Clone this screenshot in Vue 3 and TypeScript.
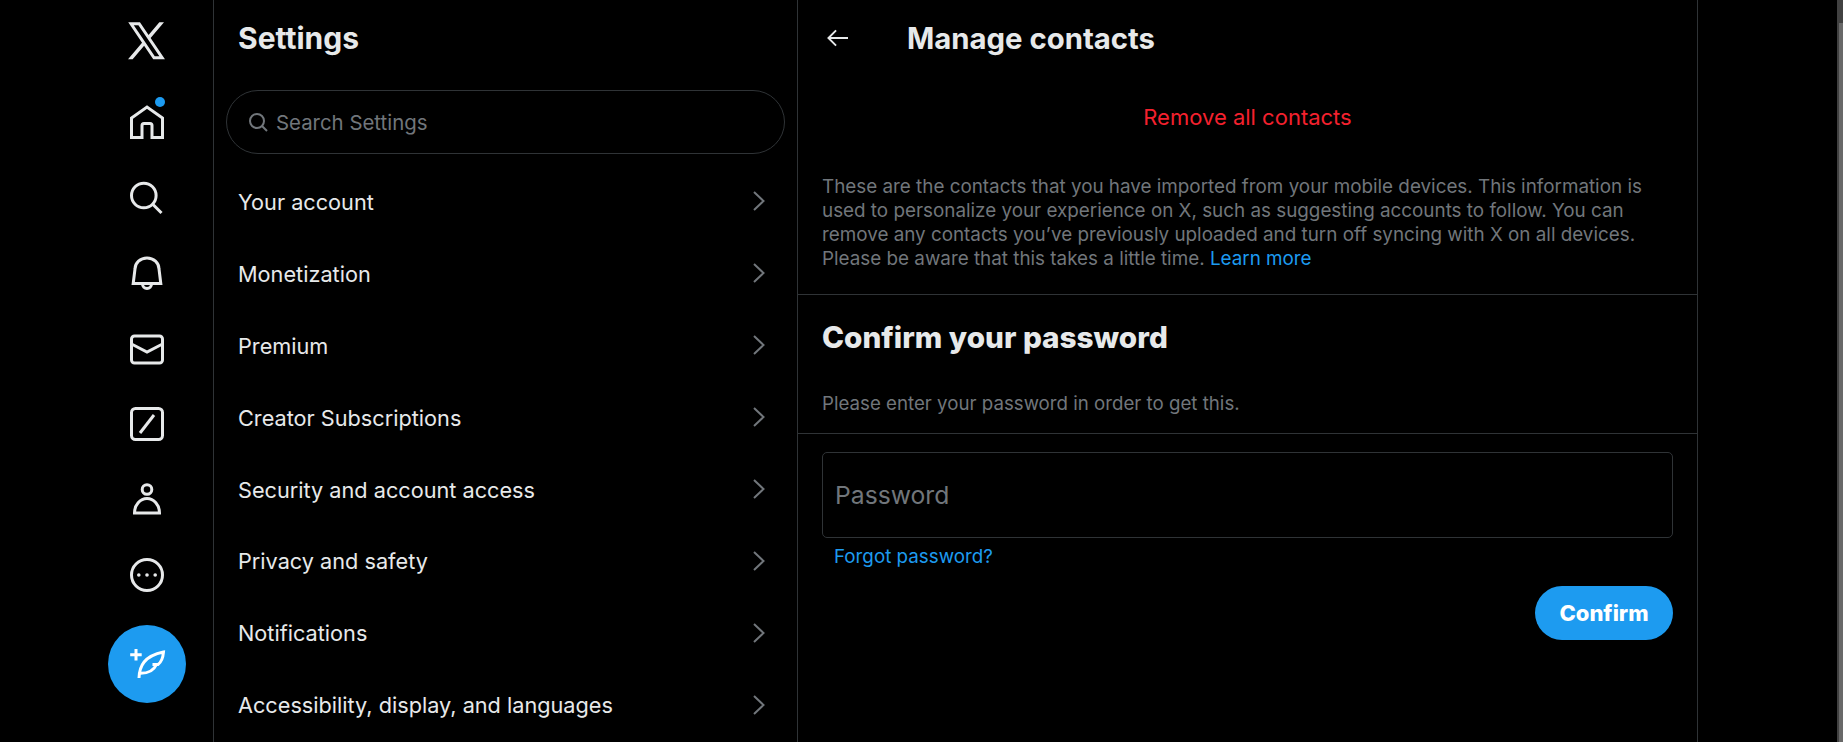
<script setup lang="ts">
const rows: string[] = [
  'Your account',
  'Monetization',
  'Premium',
  'Creator Subscriptions',
  'Security and account access',
  'Privacy and safety',
  'Notifications',
  'Accessibility, display, and languages',
]
</script>

<template>
  <div class="page">
    <nav class="rail">
      <a class="logo" aria-label="X">
        <svg viewBox="0 0 24 24" class="x-logo"><path d="M21.742 21.750l-7.563-11.179 7.056-8.321h-2.456l-5.691 6.714-4.540-6.714H2.359l7.290 10.776L2.250 21.750h2.456l6.035-7.118 4.818 7.118h6.191-.008zM7.739 3.818L18.810 20.182h-2.447L5.290 3.818h2.447z" /></svg>
      </a>
      <a class="nav-item">
        <span class="dot"></span>
        <svg viewBox="0 0 34 34" class="ico"><path d="M1.500 32.500V13L17 2l15.500 11v19.500H22V20.500a2 2 0 0 0-2-2h-6a2 2 0 0 0-2 2v12z" /></svg>
      </a>
      <a class="nav-item">
        <svg viewBox="0 0 34 34" class="ico"><circle cx="13.800" cy="14.500" r="12.300" /><path d="M23 23.500L31.500 32" /></svg>
      </a>
      <a class="nav-item">
        <svg viewBox="0 0 34 34" class="ico"><path d="M3.200 27.500L5 13a12 11 0 0 1 24 0l1.800 14.500z" /><path d="M12.500 28a4.500 4.500 0 0 0 9 0" /></svg>
      </a>
      <a class="nav-item">
        <svg viewBox="0 0 34 34" class="ico"><rect x="1.500" y="4" width="31" height="27" rx="3" /><path d="M1.500 12L17 20l15.500-8" /></svg>
      </a>
      <a class="nav-item">
        <svg viewBox="0 0 34 34" class="ico"><rect x="1.500" y="1.500" width="31" height="31" rx="4" /><path d="M10 26L24 8" /></svg>
      </a>
      <a class="nav-item">
        <svg viewBox="0 0 34 34" class="ico"><circle cx="17" cy="6.500" r="4.800" /><path d="M4.500 30a12.500 14.500 0 0 1 25 0z" /></svg>
      </a>
      <a class="nav-item">
        <svg viewBox="0 0 34 34" class="ico"><circle cx="17" cy="17" r="15.500" /><circle class="fill" cx="8.800" cy="17" r="1.800" /><circle class="fill" cx="17" cy="17" r="1.800" /><circle class="fill" cx="25.200" cy="17" r="1.800" /></svg>
      </a>
      <a class="compose">
        <svg viewBox="0 0 36 32" class="feather"><path d="M6 0v11.500M.200 5.700h11.500" /><path d="M9 29C9.500 17 14 7 33.500 3C33 9 31.500 13 28 15.500H22.500H26.500C24 21 19 24.500 10 24.300" /></svg>
      </a>
    </nav>

    <section class="settings">
      <h2 class="settings-title">Settings</h2>
      <div class="search">
        <svg viewBox="0 0 20 20" class="search-ico"><circle cx="9" cy="9" r="7" /><path d="M14 14l5 5" /></svg>
        <span>Search Settings</span>
      </div>
      <a v-for="r in rows" :key="r" class="row">
        <span>{{ r }}</span>
        <svg viewBox="0 0 12 20" class="chev"><path d="M1 1l9.500 9L1 19" /></svg>
      </a>
    </section>

    <main class="main">
      <header class="main-head">
        <svg viewBox="0 0 22 18" class="back"><path d="M9.500 1L1.500 9l8 8M1.500 9H22" /></svg>
        <h2 class="main-title">Manage contacts</h2>
      </header>
      <a class="remove">Remove all contacts</a>
      <p class="info">These are the contacts that you have imported from your mobile devices. This information is used to personalize your experience on X, such as suggesting accounts to follow. You can remove any contacts you’ve previously uploaded and turn off syncing with X on all devices. Please be aware that this takes a little time. <a class="link">Learn more</a></p>
      <div class="confirm-head">
        <h3 class="confirm-title">Confirm your password</h3>
        <p class="confirm-sub">Please enter your password in order to get this.</p>
      </div>
      <div class="form">
        <div class="input">Password</div>
        <a class="link forgot">Forgot password?</a>
        <button class="confirm-btn">Confirm</button>
      </div>
    </main>

    <div class="scrollbar"><div class="thumb"></div></div>
  </div>
</template>

<style>
html, body { margin: 0; background: #000; overflow: hidden; }
</style>

<style scoped>
.page {
  display: flex;
  width: 1843px;
  height: 742px;
  overflow: hidden;
  background: #000;
  color: #e7e9ea;
  font-family: Inter, "Liberation Sans", sans-serif;
}
.rail {
  box-sizing: border-box;
  width: 214px;
  flex: none;
  border-right: 1px solid #2f3336;
  display: flex;
  flex-direction: column;
  align-items: center;
  padding-left: 80px;
}
.logo { height: 80.500px; margin-bottom: 4px; display: flex; align-items: center; }
.x-logo { width: 49px; height: 45.500px; fill: #e7e9ea; }
.nav-item {
  position: relative;
  height: 75.500px;
  display: flex;
  align-items: center;
  justify-content: center;
}
.ico { width: 34px; height: 34px; fill: none; stroke: #e7e9ea; stroke-width: 3; }
.ico .fill { fill: #e7e9ea; stroke: none; }
.dot {
  position: absolute;
  width: 10px;
  height: 10px;
  border-radius: 50%;
  background: #1d9bf0;
  top: 12.500px;
  left: 25px;
}
.compose {
  box-sizing: border-box;
  margin-top: 12px;
  width: 78px;
  height: 78px;
  border-radius: 50%;
  background: #1d9bf0;
  display: flex;
  align-items: center;
  justify-content: center;
  padding: 2px 0 0 2px;
  flex: none;
}
.feather { width: 36px; height: 32px; fill: none; stroke: #fff; stroke-width: 3; overflow: visible; }
.settings {
  box-sizing: border-box;
  width: 584px;
  flex: none;
  border-right: 1px solid #2f3336;
}
.settings-title {
  margin: 0;
  height: 76px;
  line-height: 76px;
  padding-left: 24px;
  font-size: 30px;
  font-weight: 700;
}
.search {
  box-sizing: border-box;
  margin: 14px 12px 0;
  height: 64px;
  border: 1px solid #2f3336;
  border-radius: 32px;
  display: flex;
  align-items: center;
  padding-left: 21px;
  gap: 8px;
  color: #71767b;
  font-size: 20.400px;
}
.search-ico { width: 20px; height: 20px; fill: none; stroke: #71767b; stroke-width: 2; }
.row {
  height: 71.900px;
  display: flex;
  align-items: center;
  justify-content: space-between;
  padding: 0 32px 0 24px;
  font-size: 21.700px;
}
.row:first-of-type { margin-top: 12px; }
.chev { width: 12px; height: 20px; margin-bottom: 1px; fill: none; stroke: #71767b; stroke-width: 2; }
.main {
  box-sizing: border-box;
  width: 900px;
  flex: none;
  border-right: 1px solid #2f3336;
}
.main-head {
  height: 76px;
  display: flex;
  align-items: center;
  padding-left: 29px;
  gap: 59px;
}
.back { width: 21px; height: 18px; fill: none; stroke: #e7e9ea; stroke-width: 2; }
.main-title { margin: 0; font-size: 29.300px; font-weight: 700; }
.remove {
  display: block;
  text-align: center;
  color: #f4212e;
  font-size: 22px;
  line-height: 24px;
  margin-top: 28.500px;
}
.info {
  margin: 46.500px 0 0;
  padding: 0 24px 23px 24px;
  color: #71767b;
  font-size: 18.840px;
  line-height: 24px;
  border-bottom: 1px solid #2f3336;
}
.link { color: #1d9bf0; }
.confirm-head { border-bottom: 1px solid #2f3336; padding: 0 24px; height: 138px; }
.confirm-title { margin: 0; padding-top: 25px; font-size: 29.700px; line-height: 34px; font-weight: 800; }
.confirm-sub { margin: 38px 0 0; color: #71767b; font-size: 18.700px; line-height: 24px; }
.form {
  display: flex;
  flex-direction: column;
  padding: 18px 24px 0 24px;
}
.input {
  box-sizing: border-box;
  height: 86px;
  border: 1px solid #2f3336;
  border-radius: 5px;
  display: flex;
  align-items: center;
  padding-left: 12px;
  color: #71767b;
  font-size: 24.700px;
}
.forgot { margin: 7px 0 0 12px; font-size: 18.800px; line-height: 24px; }
.confirm-btn {
  align-self: flex-end;
  margin-top: 17px;
  width: 138px;
  height: 54px;
  border: none;
  border-radius: 27px;
  background: #1d9bf0;
  color: #fff;
  font-family: inherit;
  font-size: 22px;
  font-weight: 800;
}
.scrollbar {
  margin-left: auto;
  box-sizing: border-box;
  width: 6px;
  height: 742px;
  background: #414141;
  flex: none;
  padding: 23px 0 0 2px;
}
.thumb { height: 100%; background: #686868; }
</style>
